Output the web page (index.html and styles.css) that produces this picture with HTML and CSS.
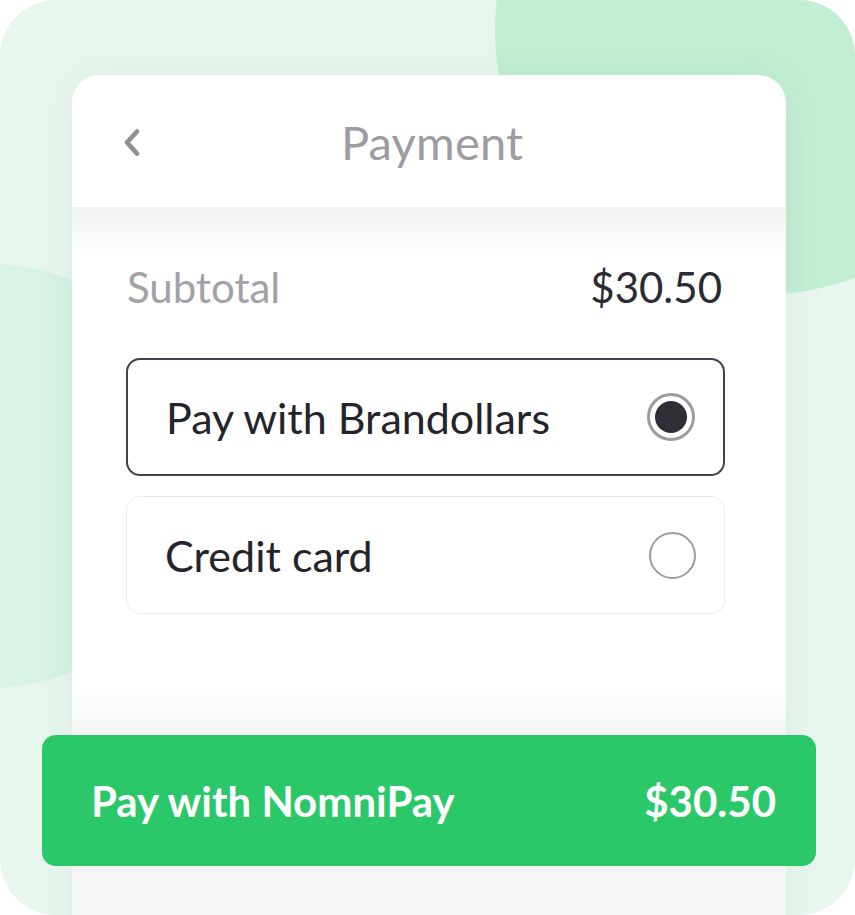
FILE: index.html
```html
<!DOCTYPE html>
<html lang="en">
<head>
<meta charset="utf-8">
<title>Payment</title>
<link rel="stylesheet" href="styles.css">
</head>
<body>
<div class="frame">
  <div class="blob blob-tr"></div>
  <div class="blob blob-l"></div>
  <div class="card">
    <header class="card-head">
      <svg class="back" width="22" height="30" viewBox="0 0 22 30" aria-hidden="true"><path d="M16 4 L6 15 L16 26" fill="none" stroke="#8f8f94" stroke-width="4.8" stroke-linecap="round" stroke-linejoin="round"/></svg>
      <h1 class="title">Payment</h1>
    </header>
    <main class="card-body">
      <div class="subtotal">
        <span class="sub-label">Subtotal</span>
        <span class="sub-value">$30.50</span>
      </div>
      <div class="options">
        <div class="option selected">
          <span class="opt-text">Pay with Brandollars</span>
          <span class="radio on"><span class="dot"></span></span>
        </div>
        <div class="option">
          <span class="opt-text">Credit card</span>
          <span class="radio"></span>
        </div>
      </div>
    </main>
    <footer class="card-foot">
      <button class="pay">
        <span>Pay with NomniPay</span>
        <span>$30.50</span>
      </button>
    </footer>
  </div>
</div>
</body>
</html>
```
FILE: styles.css
```css
* { box-sizing: border-box; }
html, body { margin: 0; padding: 0; background: #ffffff; }
body { font-family: "Lato", "Noto Sans", sans-serif; }

.frame {
  position: relative;
  width: 855px;
  height: 915px;
  border-radius: 56px;
  background: #e8f7ee;
  overflow: hidden;
  padding: 75px 69px 0 72px;
}

.blob { position: absolute; border-radius: 50%; }
.blob-tr {
  width: 530px; height: 530px;
  left: 495px; top: -235px;
  background: #c2eed4;
}
.blob-l {
  width: 424px; height: 424px;
  left: -222px; top: 264px;
  background: #d6f3e3;
}

.card {
  position: relative;
  z-index: 1;
  width: 714px;
  height: 900px;
  background: #ffffff;
  border-radius: 28px 28px 0 0;
  box-shadow: 0 0 40px rgba(20, 90, 50, 0.07);
  display: flex;
  flex-direction: column;
}

.card-head {
  height: 132px;
  display: flex;
  align-items: center;
  justify-content: center;
  position: relative;
}
.back { position: absolute; left: 49px; top: 50%; transform: translateY(-45%); }
.title {
  margin: 0;
  font-size: 47px;
  font-weight: 400;
  color: #9c9ca1;
  letter-spacing: 0.2px;
  transform: translate(3px, 1px);
}

.card-body {
  padding: 58px 61px 0 54px;
  background: linear-gradient(#f2f2f2 0, #ffffff 52px);
}

.subtotal {
  display: flex;
  justify-content: space-between;
  align-items: center;
  height: 44px;
  font-size: 42px;
  padding: 0 3px 0 1px;
}
.sub-label { color: #a2a2a6; }
.sub-value { color: #2b2b31; }

.options {
  margin-top: 49px;
  display: flex;
  flex-direction: column;
  gap: 20px;
}
.option {
  height: 118px;
  border: 1.5px solid #ebebeb;
  border-radius: 14px;
  display: flex;
  align-items: center;
  justify-content: space-between;
  padding: 0 28px 0 38px;
}
.option.selected { border: 2px solid #42424a; }
.opt-text { font-size: 43px; color: #24242a; }

.radio {
  width: 47px; height: 47px;
  border-radius: 50%;
  border: 2.5px solid #9c9c9c;
  display: flex;
  align-items: center;
  justify-content: center;
}
.radio.on { width: 48px; height: 48px; border-width: 3px; }
.dot { width: 32px; height: 32px; border-radius: 50%; background: #2e2e36; }

.card-foot {
  margin-top: 76px;
  flex: 1;
  padding-top: 45px;
  background: linear-gradient(#ffffff 0, #f5f5f5 45px, #f6f6f6 100%);
}
.pay {
  margin: 0 -30px;
  width: 774px;
  height: 131px;
  border: none;
  border-radius: 14px;
  background: #2bc86a;
  color: #ffffff;
  font-family: inherit;
  font-size: 42px;
  font-weight: 700;
  display: flex;
  align-items: center;
  justify-content: space-between;
  padding: 0 40px 0 49px;
}
```
